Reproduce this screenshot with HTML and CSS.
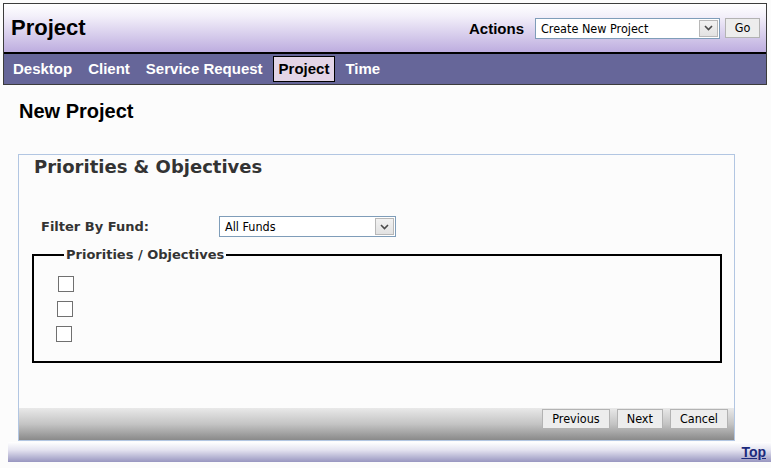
FILE: index.html
```html
<!DOCTYPE html>
<html lang="en">
<head>
<meta charset="utf-8">
<title>Project</title>
<link rel="stylesheet" href="styles.css">
</head>
<body>
<div class="frame">
  <div class="titlebar">
    <h1 class="app-title">Project</h1>
    <div class="actions">
      <span class="actions-label">Actions</span>
      <div class="select select-actions">
        <span class="select-value">Create New Project</span>
        <span class="select-btn"><svg width="9" height="6" viewBox="0 0 9 6"><path d="M1 1 L4.5 4.5 L8 1" fill="none" stroke="#4a4a4a" stroke-width="1.6"/></svg></span>
      </div>
      <button class="btn btn-go">Go</button>
    </div>
  </div>
  <nav class="nav">
    <a class="nav-item">Desktop</a>
    <a class="nav-item">Client</a>
    <a class="nav-item">Service Request</a>
    <a class="nav-item active">Project</a>
    <a class="nav-item">Time</a>
  </nav>
</div>

<h2 class="page-title">New Project</h2>

<section class="panel">
  <h3 class="panel-title">Priorities &amp; Objectives</h3>
  <div class="filter-row">
    <label class="filter-label">Filter By Fund:</label>
    <div class="select select-fund">
      <span class="select-value">All Funds</span>
      <span class="select-btn"><svg width="9" height="6" viewBox="0 0 9 6"><path d="M1 1 L4.5 4.5 L8 1" fill="none" stroke="#4a4a4a" stroke-width="1.6"/></svg></span>
    </div>
  </div>
  <fieldset class="objectives">
    <legend class="objectives-legend">Priorities / Objectives</legend>
    <ul class="check-list">
      <li class="check-row"><span class="checkbox"></span></li>
      <li class="check-row"><span class="checkbox"></span></li>
      <li class="check-row"><span class="checkbox"></span></li>
    </ul>
  </fieldset>
  <div class="panel-footer">
    <button class="btn">Previous</button>
    <button class="btn">Next</button>
    <button class="btn">Cancel</button>
  </div>
</section>

<div class="bottom-bar">
  <a class="top-link">Top</a>
</div>
</body>
</html>
```

FILE: styles.css
```css
* { box-sizing: border-box; }

body {
  margin: 0;
  background: #fcfcfc;
  font-family: "Liberation Sans", Arial, sans-serif;
  color: #000;
}

/* ---------- header frame ---------- */
.frame {
  margin: 3px 4px 0 3px;
  border: 1px solid #3c3c3c;
}

.titlebar {
  height: 50px;
  display: flex;
  align-items: center;
  justify-content: space-between;
  padding: 0 6px 0 7px;
  background: linear-gradient(#ffffff 0%, #f3f0fa 25%, #bdaddf 100%);
  border-bottom: 2px solid #000;
}

.app-title {
  margin: 0;
  font-size: 22px;
  font-weight: bold;
  line-height: 1;
}

.actions {
  display: flex;
  align-items: center;
}

.actions-label {
  font-size: 15px;
  font-weight: bold;
  margin-right: 11px;
}

.select {
  display: flex;
  align-items: center;
  height: 21px;
  background: #fff;
  border: 1px solid #7f9db9;
  padding: 1px;
}

.select-value {
  flex: 1;
  padding-left: 4px;
  font-family: "DejaVu Sans Condensed", "DejaVu Sans", sans-serif;
  font-size: 12.5px;
  color: #000;
  white-space: nowrap;
}

.select-btn {
  width: 19px;
  height: 17px;
  display: flex;
  align-items: center;
  justify-content: center;
  background: linear-gradient(#f2f2f2, #e2e2e2);
  border: 1px solid #b8b8b8;
}

.select-actions { width: 185px; margin-right: 5px; }
.select-fund { width: 177px; }

.btn {
  height: 20px;
  padding: 0 9px;
  background: #ededed;
  border: 1px solid #b3b3b3;
  font-family: "DejaVu Sans Condensed", "DejaVu Sans", sans-serif;
  font-size: 12.5px;
  color: #000;
  line-height: 18px;
}

.btn-go { width: 35px; padding: 0; }

/* ---------- nav ---------- */
.nav {
  height: 30px;
  display: flex;
  align-items: center;
  gap: 4px;
  padding-left: 3px;
  background: #666699;
}

.nav-item {
  height: 26px;
  line-height: 24px;
  padding: 0 5px;
  border: 1px solid transparent;
  font-size: 15px;
  font-weight: bold;
  color: #fff;
}

.nav-item.active {
  background: #e3d5e7;
  border-color: #000;
  color: #000;
}

/* ---------- page ---------- */
.page-title {
  margin: 15px 0 31px 19px;
  font-size: 20px;
  line-height: 23px;
  font-weight: bold;
}

.panel {
  width: 717px;
  margin-left: 18px;
  border: 1px solid #b2c6e2;
  background: #fcfcfc;
}

.panel-title {
  margin: 0;
  padding: 1px 0 0 15px;
  font-family: "DejaVu Sans", Verdana, sans-serif;
  font-size: 18px;
  line-height: 22px;
  font-weight: bold;
  color: #333;
}

.filter-row {
  display: flex;
  align-items: center;
  height: 21px;
  margin-top: 38px;
  padding-left: 22px;
}

.filter-label {
  width: 178px;
  font-family: "DejaVu Sans", Verdana, sans-serif;
  font-size: 13px;
  font-weight: bold;
  color: #333;
}

.objectives {
  margin: 10px 12px 0 13px;
  padding: 0;
  border: 2px solid #000;
  min-width: 0;
}

.objectives-legend {
  margin-left: 30px;
  padding: 0 2px;
  font-family: "DejaVu Sans", Verdana, sans-serif;
  font-size: 13px;
  font-weight: bold;
  color: #333;
}

.check-list {
  list-style: none;
  margin: 0;
  padding: 14px 0 20px;
  display: flex;
  flex-direction: column;
  gap: 10px;
}

.check-row { height: 15px; }
.check-row:nth-child(1) { margin-left: 24px; }
.check-row:nth-child(2) { margin-left: 23px; }
.check-row:nth-child(3) { margin-left: 22px; }

.checkbox {
  display: block;
  width: 16px;
  height: 16px;
  background: #fff;
  border: 1px solid #707070;
}

.panel-footer {
  height: 32px;
  margin-top: 45px;
  display: flex;
  justify-content: flex-end;
  align-items: flex-start;
  gap: 7px;
  padding: 1px 6px 0 0;
  background: linear-gradient(#e9e9e9, #c4c4c4 50%, #8a8a8a);
}

/* ---------- bottom bar ---------- */
.bottom-bar {
  margin: 1px 0 0 8px;
  height: 20px;
  display: flex;
  justify-content: flex-end;
  padding-right: 5px;
  background: linear-gradient(#ffffff, #e4e3f0 40%, #9896c0);
}

.top-link {
  font-size: 14px;
  line-height: 20px;
  font-weight: bold;
  color: #1c2a7c;
  text-decoration: underline;
}
```
